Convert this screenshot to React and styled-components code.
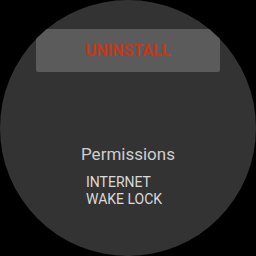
import React from "react";
import styled, { createGlobalStyle } from "styled-components";

const Global = createGlobalStyle`
  html, body { margin: 0; padding: 0; background: #000; }
  body { width: 256px; height: 256px; overflow: hidden; font-family: Roboto, "Liberation Sans", sans-serif; }
`;

const Watch = styled.div`
  width: 256px;
  height: 256px;
  border-radius: 50%;
  background: #333333;
  overflow: hidden;
  display: flex;
  flex-direction: column;
  align-items: center;
`;

const UninstallButton = styled.button`
  margin-top: 29px;
  width: 184px;
  height: 43px;
  border: none;
  border-radius: 2px;
  background: #5b5b5b;
  color: #c2381b;
  font-family: Roboto, "Liberation Sans", sans-serif;
  font-weight: 700;
  font-size: 16px;
  letter-spacing: 0;
  padding: 0 0 1px 0;
`;

const Section = styled.div`
  margin-top: 72px;
  display: flex;
  flex-direction: column;
  align-items: center;
`;

const Title = styled.div`
  color: #cfcfcf;
  font-size: 17px;
  line-height: 20px;
`;

const List = styled.div`
  margin-top: 10px;
  display: flex;
  flex-direction: column;
  align-self: flex-start;
  margin-left: 5px;
`;

const Item = styled.div`
  color: #dadada;
  font-size: 14px;
  line-height: 17px;
`;

export default function App() {
  return (
    <>
      <Global />
      <Watch>
        <UninstallButton>UNINSTALL</UninstallButton>
        <Section>
          <Title>Permissions</Title>
          <List>
            <Item>INTERNET</Item>
            <Item>WAKE LOCK</Item>
          </List>
        </Section>
      </Watch>
    </>
  );
}
